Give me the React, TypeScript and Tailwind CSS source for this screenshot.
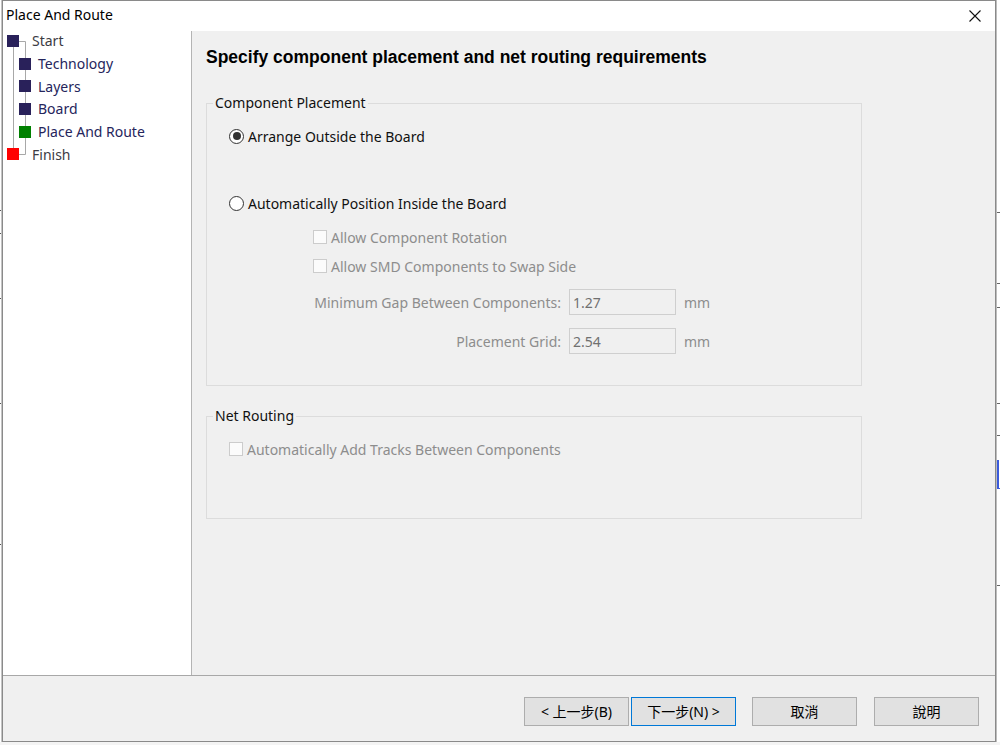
import React from "react";

const ui = { fontFamily: '"Noto Sans", "Open Sans", sans-serif' };
const cjk = { fontFamily: '"Noto Sans", "Noto Sans CJK TC", sans-serif' };

const steps = [
    { label: "Start", color: "bg-[#29215a]", child: false },
    { label: "Technology", color: "bg-[#29215a]", child: true },
    { label: "Layers", color: "bg-[#29215a]", child: true },
    { label: "Board", color: "bg-[#29215a]", child: true },
    { label: "Place And Route", color: "bg-[#008000]", child: true },
    { label: "Finish", color: "bg-[#ff0000]", child: false },
];

function StepTree() {
    return (
        <div className="relative w-[189px] h-full bg-white border-r border-[#b4b4b4]">
            {/* connector lines behind the step squares */}
            <svg className="absolute left-0 top-0" width="40" height="140">
                <g stroke="#a8a8a8" strokeWidth="1" fill="none">
                    <line x1="10.5" y1="10" x2="10.5" y2="123" />
                    <line x1="22.5" y1="10.5" x2="22.5" y2="123.5" />
                    <line x1="10" y1="10.5" x2="22.5" y2="10.5" />
                    <line x1="10" y1="123.5" x2="22.5" y2="123.5" />
                </g>
            </svg>
            <ul className="relative -mt-[1.5px]">
                {steps.map((s) => (
                    <li key={s.label} className="flex flex-row items-center h-[22.7px]">
                        {s.child ? (
                            <>
                                <span className={`ml-[16px] w-[12px] h-[12px] ${s.color}`} />
                                <span className="ml-[7px] text-[14px] text-[#25255c]">{s.label}</span>
                            </>
                        ) : (
                            <>
                                <span className={`ml-[4px] w-[12px] h-[12px] ${s.color}`} />
                                <span className="ml-[13px] text-[14px] text-[#3c3c44]">{s.label}</span>
                            </>
                        )}
                    </li>
                ))}
            </ul>
        </div>
    );
}

function Radio({ checked, label }: { checked?: boolean; label: string }) {
    return (
        <div className="flex flex-row items-center h-[20px] pl-[22px]">
            <span className="w-[15px] h-[15px] rounded-full border border-[#333333] bg-white flex items-center justify-center">
                {checked && <span className="w-[8px] h-[8px] rounded-full bg-[#333333]" />}
            </span>
            <span className="ml-[4px] text-[14px] text-[#111111]">{label}</span>
        </div>
    );
}

function Check({ label, indent }: { label: string; indent: string }) {
    return (
        <div className={`flex flex-row items-center h-[20px] ${indent}`}>
            <span className="w-[14px] h-[14px] border border-[#cccccc] bg-[#fbfbfb]" />
            <span className="ml-[4px] text-[14px] text-[#8d8d8d]">{label}</span>
        </div>
    );
}

function NumberRow({ label, value }: { label: string; value: string }) {
    return (
        <div className="flex flex-row items-center h-[26px]">
            <span className="w-[354px] text-right text-[14px] text-[#8d8d8d]">{label}</span>
            <div className="ml-[8px] w-[107px] h-[26px] border border-[#cfcfcf] bg-[#f0f0f0] flex items-center pl-[3px] text-[14px] text-[#707070]">
                {value}
            </div>
            <span className="ml-[8px] text-[14px] text-[#8d8d8d]">mm</span>
        </div>
    );
}

function Btn({ children, active }: { children: React.ReactNode; active?: boolean }) {
    return (
        <button
            className={`w-[105px] h-[29px] bg-[#e1e1e1] border text-[14px] text-black flex items-center justify-center ${active ? "border-[#0078d7]" : "border-[#adadad]"}`}
            style={cjk}
        >
            {children}
        </button>
    );
}

export default function App() {
    return (
        <div className="w-[1000px] h-[745px] bg-white flex flex-col overflow-hidden" style={ui}>
            <div className="flex flex-row h-[742px]">
                {/* bits of the window underneath */}
                <div className="w-[2px] h-full flex flex-col bg-white border-r border-[#c4c4c4]">
                    <div className="h-[210px]" />
                    <div className="h-[1px] bg-[#555]" />
                    <div className="h-[22px]" />
                    <div className="h-[1px] bg-[#555]" />
                    <div className="h-[64px]" />
                    <div className="h-[1px] bg-[#555]" />
                    <div className="h-[104px]" />
                    <div className="h-[1px] bg-[#555]" />
                    <div className="h-[140px]" />
                    <div className="h-[1px] bg-[#555]" />
                </div>

                <div className="w-[994px] h-full border border-[#8a8a8a] flex flex-col bg-[#f0f0f0]">
                    <div className="h-[30px] bg-white flex flex-row items-center justify-between pl-[3px] pr-[14px] pb-[3px]">
                        <span className="text-[14px] text-black">Place And Route</span>
                        <svg width="12" height="12" viewBox="0 0 12 12" className="mt-[2px]">
                            <path d="M0.5 0.5 L11.5 11.5 M11.5 0.5 L0.5 11.5" stroke="#111" strokeWidth="1.1" />
                        </svg>
                    </div>

                    <div className="h-[644px] flex flex-row">
                        <StepTree />
                        <div className="flex-1 pl-[14px] pt-[16px]">
                            <h2
                                className="h-[20px] leading-[20px] text-[17.5px] font-bold text-black"
                                style={{ fontFamily: '"Liberation Sans", Arial, sans-serif' }}
                            >
                                Specify component placement and net routing requirements
                            </h2>

                            <fieldset className="mt-[26px] w-[656px] border border-[#dcdcdc]">
                                <legend className="ml-[6px] px-[2px] leading-[20px] text-[14px] text-[#111111]">
                                    Component Placement
                                </legend>
                                <div className="pt-[13px] pb-[31px] flex flex-col">
                                    <Radio checked label="Arrange Outside the Board" />
                                    <div className="mt-[47px]">
                                        <Radio label="Automatically Position Inside the Board" />
                                    </div>
                                    <div className="mt-[14px]">
                                        <Check indent="pl-[106px]" label="Allow Component Rotation" />
                                    </div>
                                    <div className="mt-[9px]">
                                        <Check indent="pl-[106px]" label="Allow SMD Components to Swap Side" />
                                    </div>
                                    <div className="mt-[13px]">
                                        <NumberRow label="Minimum Gap Between Components:" value="1.27" />
                                    </div>
                                    <div className="mt-[13px]">
                                        <NumberRow label="Placement Grid:" value="2.54" />
                                    </div>
                                </div>
                            </fieldset>

                            <fieldset className="mt-[20px] w-[656px] border border-[#dcdcdc]">
                                <legend className="ml-[6px] px-[2px] leading-[20px] text-[14px] text-[#111111]">
                                    Net Routing
                                </legend>
                                <div className="pt-[13px] pb-[59px]">
                                    <Check indent="pl-[22px]" label="Automatically Add Tracks Between Components" />
                                </div>
                            </fieldset>
                        </div>
                    </div>

                    <div className="flex-1 border-t border-[#a8a8a8] pt-[21px] pr-[16px] flex flex-row justify-end items-start">
                        <Btn>&lt; 上一步(B)</Btn>
                        <div className="ml-[2px]">
                            <Btn active>下一步(N) &gt;</Btn>
                        </div>
                        <div className="ml-[16px]">
                            <Btn>取消</Btn>
                        </div>
                        <div className="ml-[17px]">
                            <Btn>說明</Btn>
                        </div>
                    </div>
                </div>

                <div className="w-[4px] h-full flex flex-col bg-white border-l border-[#bdbdbd]">
                    <div className="h-[212px]" />
                    <div className="h-[1px] bg-[#666]" />
                    <div className="h-[70px]" />
                    <div className="h-[1px] bg-[#666]" />
                    <div className="h-[23px]" />
                    <div className="h-[1px] bg-[#666]" />
                    <div className="h-[95px]" />
                    <div className="h-[1px] bg-[#666]" />
                    <div className="h-[31px]" />
                    <div className="h-[1px] bg-[#666]" />
                    <div className="h-[24px]" />
                    <div className="h-[28px] w-[2px] bg-[#3b5bdb]" />
                    <div className="h-[1px] bg-[#3b5bdb]" />
                    <div className="h-[96px]" />
                    <div className="h-[1px] bg-[#666]" />
                </div>
            </div>
            <div className="flex-1 bg-[#f4f4f4]" />
        </div>
    );
}
